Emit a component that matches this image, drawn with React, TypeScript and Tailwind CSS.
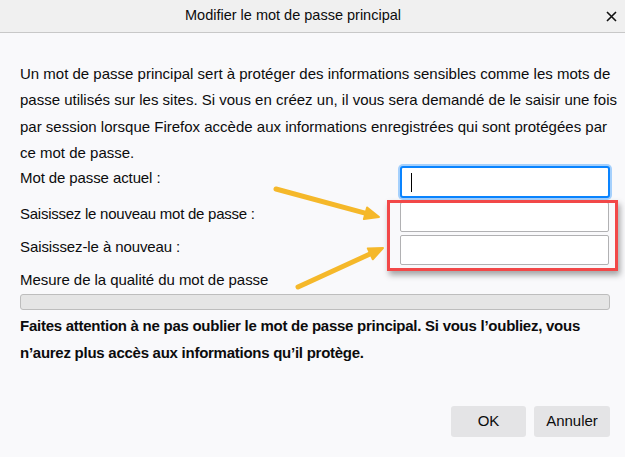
import React from "react";

export default function App() {
  return (
    <div className="relative w-[625px] h-[457px] bg-[#f9f9fb] text-[#0c0c0d] overflow-hidden font-['Liberation_Sans',Arial,sans-serif] text-[15px]">
      {/* Title bar */}
      <div className="flex h-[33px] items-center bg-[#f0f0f0] border-b border-[#c8c8c8]">
        <div className="flex-1 text-center text-[14.5px]">Modifier le mot de passe principal</div>
        <div className="flex w-[39px] justify-end pr-[8px]">
          <svg width="11" height="11" viewBox="0 0 11 11">
            <path d="M1 1 L10 10 M10 1 L1 10" stroke="#111" strokeWidth="1.6" fill="none" />
          </svg>
        </div>
      </div>

      <div className="pl-[20px] pr-[15px] pt-[28px]">
        <p className="leading-[26.25px] whitespace-nowrap">
          Un mot de passe principal sert à protéger des informations sensibles comme les mots de
          <br />
          passe utilisés sur les sites. Si vous en créez un, il vous sera demandé de le saisir une fois
          <br />
          par session lorsque Firefox accède aux informations enregistrées qui sont protégées par
          <br />
          ce mot de passe.
        </p>

        <div className="flex flex-col">
          <div className="flex h-[32px] items-center justify-between">
            <span className="pb-[7px] tracking-[-0.1px]">Mot de passe actuel :</span>
            <div className="flex h-[32px] w-[210px] items-center rounded-[3px] border-2 border-[#0a84ff] bg-white pl-[9px] shadow-[0_0_0_2px_rgba(10,132,255,0.35)]">
              <div className="h-[19px] w-px bg-black" />
            </div>
          </div>
          <div className="mt-[4px] flex h-[30px] items-center justify-between">
            <span className="pb-[6px] tracking-[-0.25px]">Saisissez le nouveau mot de passe :</span>
            <div className="h-[30px] w-[209px] mr-px rounded-[2px] border border-[#b1b1b3] bg-white" />
          </div>
          <div className="mt-[3px] flex h-[30px] items-center justify-between">
            <span className="pb-[5px] tracking-[-0.1px]">Saisissez-le à nouveau :</span>
            <div className="h-[30px] w-[209px] mr-px rounded-[2px] border border-[#b1b1b3] bg-white" />
          </div>
        </div>

        <div className="mt-[5px] leading-[20px] tracking-[-0.05px]">Mesure de la qualité du mot de passe</div>
        <div className="mt-[4px] h-[16px] rounded-[3px] border border-[#bdbdbd] bg-[#e5e5e5]" />

        <p className="mt-[2px] font-bold leading-[27px] whitespace-nowrap tracking-[-0.26px]">
          Faites attention à ne pas oublier le mot de passe principal. Si vous l’oubliez, vous
          <br />
          n’aurez plus accès aux informations qu’il protège.
        </p>

        <div className="mt-[40px] flex justify-end gap-[8px]">
          <button className="h-[31px] w-[75px] rounded-[3px] bg-[#e4e4e6] text-[15px]">OK</button>
          <button className="h-[31px] w-[76px] rounded-[3px] bg-[#e4e4e6] text-[15px]">Annuler</button>
        </div>
      </div>

      {/* Red highlight box (annotation overlay) */}
      <div className="pointer-events-none absolute left-[387px] top-[200px] h-[71px] w-[231px] border-[3px] border-[#f24848] shadow-[2px_4px_6px_rgba(0,0,0,0.35)]" />

      {/* Yellow arrows (annotation overlay) */}
      <svg className="pointer-events-none absolute left-0 top-0" width="625" height="457" viewBox="0 0 625 457">
        <line x1="276" y1="189" x2="366" y2="213.3" stroke="#f5b82a" strokeWidth="5" strokeLinecap="round" />
        <polygon points="379,217 363.9,219.1 367.1,207.5" fill="#f5b82a" stroke="#f5b82a" strokeWidth="2" strokeLinejoin="round" />
        <line x1="298" y1="287" x2="370.5" y2="253.8" stroke="#f5b82a" strokeWidth="5" strokeLinecap="round" />
        <polygon points="383,248 372.8,259.3 367.8,248.4" fill="#f5b82a" stroke="#f5b82a" strokeWidth="2" strokeLinejoin="round" />
      </svg>
    </div>
  );
}
